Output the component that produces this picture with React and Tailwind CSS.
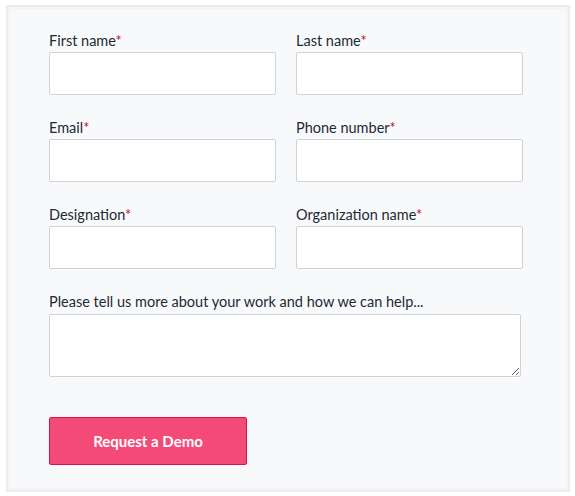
const fields = [
  ["First name", "Last name"],
  ["Email", "Phone number"],
  ["Designation", "Organization name"],
];

function Field({ label }) {
  return (
    <div className="flex flex-col">
      <label className="text-[14.5px] leading-[20px] text-[#1d2a35] mb-px">
        {label}
        <span className="text-[#c8102e]">*</span>
      </label>
      <input className="h-[43px] w-[227px] border border-[#cfd2d6] bg-white rounded-[2px] outline-none" />
    </div>
  );
}

export default function App() {
  return (
    <div className="w-[575px] h-[496px] bg-white pt-[5px] pl-[6px]" style={{ fontFamily: "Lato, 'Noto Sans', sans-serif" }}>
      <div className="w-[564px] h-[487px] border-2 border-[#eaecef] bg-[#f8f9fb] pl-[41px] pt-[24px] shadow-[inset_0_0_0_2px_#f3f4f6]">
        <div className="flex flex-col gap-[23px]">
          {fields.map((row) => (
            <div key={row[0]} className="flex gap-[20px]">
              <Field label={row[0]} />
              <Field label={row[1]} />
            </div>
          ))}
        </div>
        <div className="flex flex-col mt-[23px]">
          <label className="text-[14.5px] leading-[20px] text-[#1d2a35] mb-[2px]">
            Please tell us more about your work and how we can help...
          </label>
          <textarea className="h-[63px] w-[472px] border border-[#cfd2d6] bg-white rounded-[2px] outline-none" />
        </div>
        <button className="mt-[40px] w-[198px] h-[48px] bg-[#f34a77] border border-[#d2164c] rounded-[2px] text-white font-bold text-[15px]">
          Request a Demo
        </button>
      </div>
    </div>
  );
}
